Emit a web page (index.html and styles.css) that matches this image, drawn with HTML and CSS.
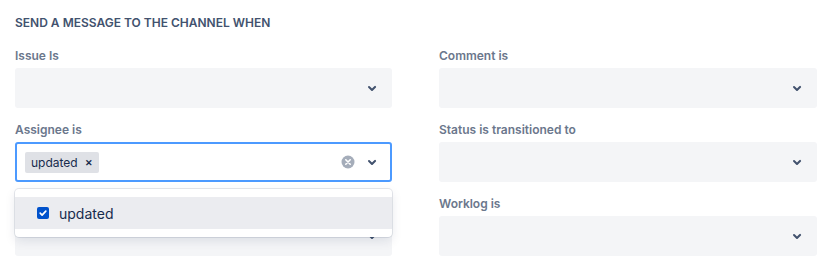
FILE: index.html
```html
<!DOCTYPE html>
<html>

<head>
  <title>Channel notifications</title>
  <link rel="stylesheet" href="styles.css">
</head>

<body>
  <h2 class="section-title">SEND A MESSAGE TO THE CHANNEL WHEN</h2>

  <div class="fields">
    <div class="field">
      <label>Issue Is</label>
      <div class="select">
        <div class="select-value"></div>
        <span class="chevron"><svg width="24" height="24" viewBox="0 0 24 24"><path d="M8.3 10.3a1 1 0 0 1 1.4 0L12 12.6l2.3-2.3a1 1 0 1 1 1.4 1.4l-3 3a1 1 0 0 1-1.4 0l-3-3a1 1 0 0 1 0-1.4z" fill="currentColor"/></svg></span>
      </div>
    </div>

    <div class="field">
      <label>Comment is</label>
      <div class="select">
        <div class="select-value"></div>
        <span class="chevron"><svg width="24" height="24" viewBox="0 0 24 24"><path d="M8.3 10.3a1 1 0 0 1 1.4 0L12 12.6l2.3-2.3a1 1 0 1 1 1.4 1.4l-3 3a1 1 0 0 1-1.4 0l-3-3a1 1 0 0 1 0-1.4z" fill="currentColor"/></svg></span>
      </div>
    </div>

    <div class="field field-open">
      <label>Assignee is</label>
      <div class="select select-focused">
        <div class="select-value">
          <span class="chip">updated <span class="chip-remove">&#x2715;</span></span>
        </div>
        <span class="clear"><svg width="24" height="24" viewBox="0 0 24 24"><circle cx="12" cy="12" r="6.5" fill="currentColor"/><path d="M9.8 9.8l4.4 4.4M14.2 9.8l-4.4 4.4" stroke="#fff" stroke-width="1.6" stroke-linecap="round"/></svg></span>
        <span class="chevron"><svg width="24" height="24" viewBox="0 0 24 24"><path d="M8.3 10.3a1 1 0 0 1 1.4 0L12 12.6l2.3-2.3a1 1 0 1 1 1.4 1.4l-3 3a1 1 0 0 1-1.4 0l-3-3a1 1 0 0 1 0-1.4z" fill="currentColor"/></svg></span>
      </div>
      <div class="menu">
        <div class="menu-option">
          <span class="checkbox"><svg width="12" height="12" viewBox="0 0 12 12"><path d="M3.2 6.2l1.9 1.9 3.7-4" fill="none" stroke="#fff" stroke-width="1.7" stroke-linecap="round" stroke-linejoin="round"/></svg></span>
          updated
        </div>
      </div>
    </div>

    <div class="field">
      <label>Status is transitioned to</label>
      <div class="select">
        <div class="select-value"></div>
        <span class="chevron"><svg width="24" height="24" viewBox="0 0 24 24"><path d="M8.3 10.3a1 1 0 0 1 1.4 0L12 12.6l2.3-2.3a1 1 0 1 1 1.4 1.4l-3 3a1 1 0 0 1-1.4 0l-3-3a1 1 0 0 1 0-1.4z" fill="currentColor"/></svg></span>
      </div>
    </div>

    <div class="field">
      <label>Priority is</label>
      <div class="select">
        <div class="select-value"></div>
        <span class="chevron"><svg width="24" height="24" viewBox="0 0 24 24"><path d="M8.3 10.3a1 1 0 0 1 1.4 0L12 12.6l2.3-2.3a1 1 0 1 1 1.4 1.4l-3 3a1 1 0 0 1-1.4 0l-3-3a1 1 0 0 1 0-1.4z" fill="currentColor"/></svg></span>
      </div>
    </div>

    <div class="field">
      <label>Worklog is</label>
      <div class="select">
        <div class="select-value"></div>
        <span class="chevron"><svg width="24" height="24" viewBox="0 0 24 24"><path d="M8.3 10.3a1 1 0 0 1 1.4 0L12 12.6l2.3-2.3a1 1 0 1 1 1.4 1.4l-3 3a1 1 0 0 1-1.4 0l-3-3a1 1 0 0 1 0-1.4z" fill="currentColor"/></svg></span>
      </div>
    </div>
  </div>
</body>

</html>
```

FILE: styles.css
```css
body {
  margin: 0;
  padding: 13px 13px 0 15px;
  background-color: #ffffff;
  font-family: Inter, "Noto Sans", sans-serif;
  color: #172b4d;
}

.section-title {
  margin: 0;
  font-size: 12px;
  line-height: 20px;
  font-weight: 600;
  color: #42526e;
}

.fields {
  margin-top: 15px;
  display: grid;
  grid-template-columns: 377px 378px;
  column-gap: 47px;
  row-gap: 14px;
}

.field {
  position: relative;
}

.field label {
  display: block;
  font-size: 12px;
  line-height: 16px;
  font-weight: 600;
  color: #6b778c;
  margin-bottom: 4px;
}

.select {
  display: flex;
  align-items: center;
  height: 40px;
  box-sizing: border-box;
  padding: 0 6px 0 8px;
  background-color: #f4f5f7;
  border: 2px solid #f4f5f7;
  border-radius: 3px;
}

.select-focused {
  background-color: #ffffff;
  border-color: #4c9aff;
}

.select-value {
  flex: 1;
  display: flex;
  align-items: center;
}

.chip {
  display: inline-flex;
  align-items: center;
  height: 21px;
  padding: 0 6px 0 6px;
  background-color: #dfe1e6;
  border-radius: 2px;
  font-size: 12px;
  color: #172b4d;
}

.chip-remove {
  margin-left: 7px;
  font-size: 9px;
  font-weight: 700;
  color: #172b4d;
}

.clear {
  display: flex;
  color: #a5adba;
}

.chevron {
  display: flex;
  color: #42526e;
}

.menu {
  position: absolute;
  left: 0;
  right: 0;
  top: calc(100% + 7px);
  padding: 8px 0;
  background-color: #ffffff;
  border-radius: 4px;
  box-shadow: 0 0 0 1px rgba(9, 30, 66, 0.1), 0 4px 11px rgba(9, 30, 66, 0.1);
  z-index: 2;
}

.menu-option {
  display: flex;
  align-items: center;
  height: 32px;
  padding-left: 22px;
  background-color: #ebecf0;
  font-size: 14px;
  color: #172b4d;
}

.checkbox {
  display: flex;
  width: 12px;
  height: 12px;
  margin-right: 10px;
  background-color: #0052cc;
  border-radius: 2px;
}
```
